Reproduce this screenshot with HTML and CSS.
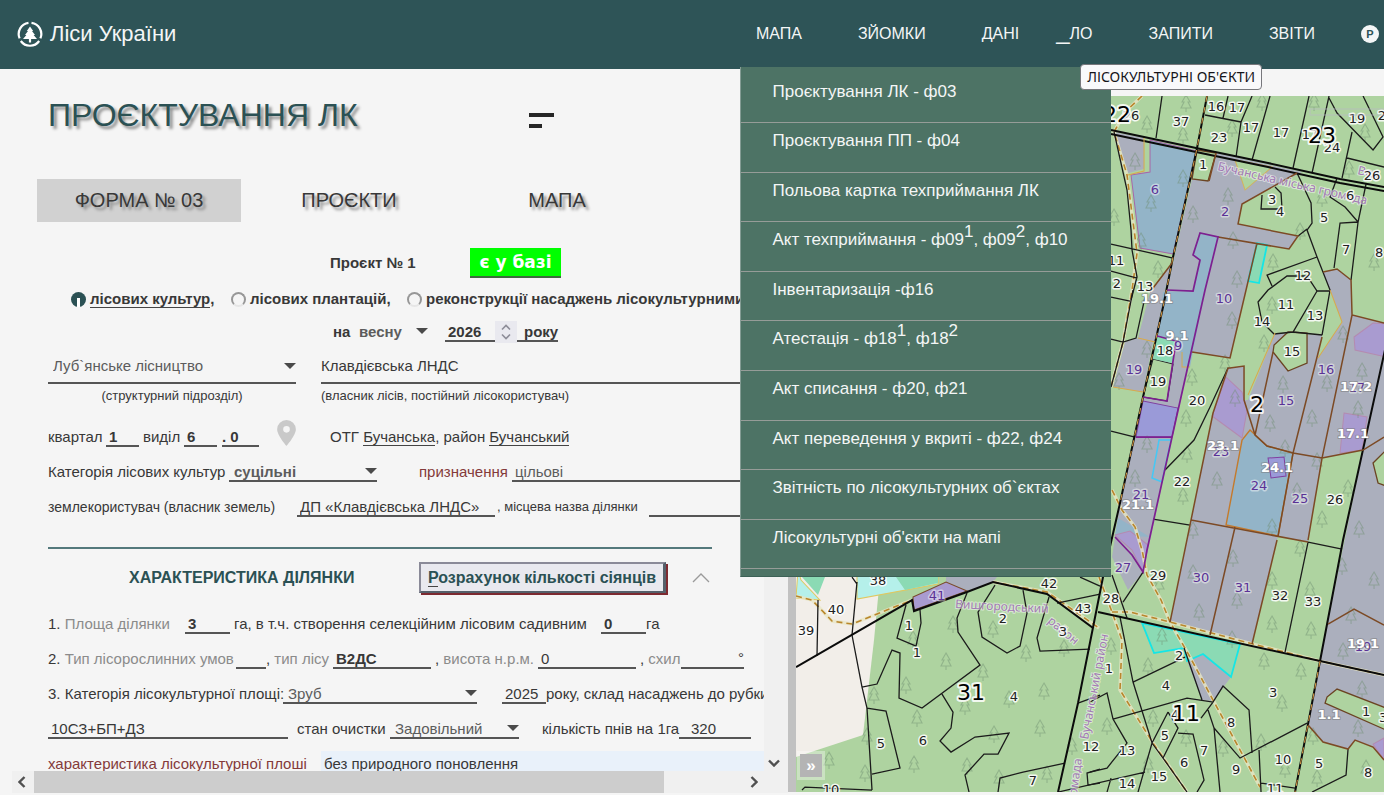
FILE: index.html
```html
<!DOCTYPE html>
<html lang="uk">
<head>
<meta charset="utf-8">
<title>Ліси України</title>
<link rel="stylesheet" href="styles.css">
</head>
<body>
<header class="top">
  <a class="brand" href="#">
    <svg class="brand-icon" viewBox="0 0 26 26" aria-hidden="true">
      <g fill="none" stroke="#fff" stroke-width="2.2">
        <path d="M11.5 1.8A11.3 11.3 0 0 0 2.6 17.4"/>
        <path d="M14.5 1.8A11.3 11.3 0 0 1 23.4 17.4"/>
        <path d="M3.8 20A11.3 11.3 0 0 0 22.2 20"/>
      </g>
      <path fill="#fff" d="M13 5.5L16.2 10H15L18 14H16.6L20 18H14.1V21.5H11.9V18H6L9.4 14H8L11 10H9.8Z"/>
    </svg>
    <span>Ліси України</span>
  </a>
  <nav>
    <ul class="nav">
      <li><a href="#">МАПА</a></li>
      <li><a href="#">ЗЙОМКИ</a></li>
      <li><a href="#">ДАНІ</a></li>
      <li class="open"><a href="#"><span class="mark">_</span>ЛО</a>
        <ul class="menu">
          <li><a href="#">Проєктування ЛК - ф03</a></li>
          <li><a href="#">Проєктування ПП - ф04</a></li>
          <li><a href="#">Польова картка техприймання ЛК</a></li>
          <li><a href="#">Акт техприймання - ф09<sup>1</sup>, ф09<sup>2</sup>, ф10</a></li>
          <li><a href="#">Інвентаризація -ф16</a></li>
          <li><a href="#">Атестація - ф18<sup>1</sup>, ф18<sup>2</sup></a></li>
          <li><a href="#">Акт списання - ф20, ф21</a></li>
          <li><a href="#">Акт переведення у вкриті - ф22, ф24</a></li>
          <li><a href="#">Звітність по лісокультурних об`єктах</a></li>
          <li><a href="#">Лісокультурні об'єкти на мапі</a></li>
        </ul>
        <span class="tip" role="tooltip">ЛІСОКУЛЬТУРНІ ОБ'ЄКТИ</span>
      </li>
      <li><a href="#">ЗАПИТИ</a></li>
      <li><a href="#">ЗВІТИ</a></li>
      <li class="user"><a class="avatar" href="#">P</a></li>
    </ul>
  </nav>
</header>
<main class="split">
  <section class="panel">
    <div class="panel-head">
      <h1>ПРОЄКТУВАННЯ ЛК</h1>
      <button class="burger" type="button" aria-label="Меню"><span></span><span></span></button>
    </div>
    <div class="tabs">
      <button class="tab on" type="button">ФОРМА № 03</button>
      <button class="tab" type="button">ПРОЄКТИ</button>
      <button class="tab" type="button">МАПА</button>
    </div>
    <div class="frame">
      <form class="form">
        <div class="row r-project"><b>Проєкт № 1</b><output class="badge">є у базі</output></div>
        <div class="row r-kind">
          <label class="kind"><input type="radio" name="kind" checked><span><u>лісових культур</u>,</span></label>
          <label class="kind"><input type="radio" name="kind"><span>лісових плантацій,</span></label>
          <label class="kind"><input type="radio" name="kind"><span>реконструкції насаджень лісокультурними</span></label>
        </div>
        <div class="row r-year">
          <label for="season">на</label>
          <span class="sel plain"><select id="season"><option>весну</option></select></span>
          <input id="year" class="field strong" type="text" value="2026">
          <button class="spin" type="button" aria-label="Змінити рік"><svg viewBox="0 0 22 22"><path d="M7 8.5L11 4.5L15 8.5M7 13.5L11 17.5L15 13.5" fill="none" stroke="#8d8d98" stroke-width="1.6"/></svg></button>
          <label class="under" for="year">року</label>
        </div>
        <div class="row r-org">
          <span class="sel tall"><select id="unit"><option>Луб`янське лісництво</option></select></span>
          <input id="owner" class="field tall" type="text" value="Клавдієвська ЛНДС">
        </div>
        <div class="captions">
          <label for="unit">(структурний підрозділ)</label>
          <label for="owner">(власник лісів, постійний лісокористувач)</label>
        </div>
        <div class="row r-plot">
          <label for="kv">квартал</label><input id="kv" class="field strong" value="1">
          <label for="vd">виділ</label><input id="vd" class="field strong" value="6"><input class="field strong" aria-label="підвиділ" value=". 0">
          <svg class="pin" viewBox="0 0 18 25" aria-hidden="true"><path fill="#c9c9c9" fill-rule="evenodd" d="M9 0A9 9 0 0 0 0 9C0 15 9 25 9 25S18 15 18 9A9 9 0 0 0 9 0ZM9 5.8A3.2 3.2 0 1 1 9 12.2A3.2 3.2 0 1 1 9 5.8Z"/></svg>
          <span>ОТГ <u>Бучанська</u>, район <u>Бучанський</u></span>
        </div>
        <div class="row r-cat">
          <label for="cat">Категорія лісових культур</label>
          <span class="sel strong"><select id="cat"><option>суцільні</option></select></span>
          <label class="red" for="purpose">призначення</label><input id="purpose" class="field dim" value="цільові">
        </div>
        <div class="row r-land">
          <label class="owner-label" for="land">землекористувач (власник земель)</label><input id="land" class="field" value="ДП «Клавдієвська ЛНДС»">
          <label class="small" for="place">, місцева назва ділянки</label><input id="place" class="field">
        </div>
        <hr>
        <div class="row r-head">
          <h2>ХАРАКТЕРИСТИКА ДІЛЯНКИ</h2>
          <button class="calc" type="button"><u>Р</u>озрахунок кількості сіянців</button>
          <button class="fold" type="button" aria-label="Згорнути"><svg viewBox="0 0 18 10"><path d="M1 9L9 1L17 9" fill="none" stroke="#9a9a9a" stroke-width="1.3"/></svg></button>
        </div>
        <div class="row r-area">
          <label for="area">1. <span class="soft">Площа ділянки</span></label><input id="area" class="field strong" value="3">
          <label for="area2">га, в т.ч. створення селекційним лісовим садивним</label><input id="area2" class="field strong" value="0"><span>га</span>
        </div>
        <div class="row r-type">
          <label for="tlu">2. <span class="soft">Тип лісорослинних умов</span></label><input id="tlu" class="field">
          <label for="tl">, <span class="soft">тип лісу</span></label><input id="tl" class="field strong" value="В2ДС">
          <label for="alt">, <span class="soft">висота н.р.м.</span></label><input id="alt" class="field" value="0">
          <label for="slope">, <span class="soft">схил</span></label><input id="slope" class="field right" value="°">
        </div>
        <div class="row r-lot">
          <label for="lot">3. Категорія лісокультурної площі:</label>
          <span class="sel"><select id="lot"><option>Зруб</option></select></span>
          <input id="cut" class="field" value="2025"><label for="cut">року, склад насаджень до рубки</label>
        </div>
        <div class="row r-clean">
          <input class="field" aria-label="склад насаджень" value="10СЗ+БП+ДЗ"><label for="clean">стан очистки</label>
          <span class="sel"><select id="clean"><option>Задовільний</option></select></span>
          <label for="stumps">кількість пнів на 1га</label><input id="stumps" class="field inset" value="320">
        </div>
        <div class="row r-note">
          <label class="red" for="note">характеристика лісокультурної плоші</label><input id="note" class="note" value="без природного поновлення">
        </div>
      </form>
      <div class="vbar"><svg viewBox="0 0 12 8"><path d="M1 1.5L6 6.5L11 1.5" fill="none" stroke="#505050" stroke-width="2.4"/></svg></div>
      <div class="hbar">
        <svg viewBox="0 0 8 12"><path d="M6.5 1L1.5 6L6.5 11" fill="none" stroke="#505050" stroke-width="2.4"/></svg>
        <div class="track"><div class="thumb"></div></div>
        <svg viewBox="0 0 8 12"><path d="M1.5 1L6.5 6L1.5 11" fill="none" stroke="#505050" stroke-width="2.4"/></svg>
      </div>
    </div>
  </section>
  <div class="divider"></div>
  <section class="map">
    <svg class="canvas" viewBox="796 96 588 696" preserveAspectRatio="xMinYMin slice" role="img" aria-label="Мапа кварталів">
      <defs>
        <g id="t"><path d="M0 -7L4 0H2L5 6H-5L-2 0H-4ZM0 6V10" fill="none" stroke="#6f8f72" stroke-opacity=".45" stroke-width="1.1"/></g>
      </defs>
      <rect x="796" y="96" width="588" height="696" fill="#aed3a0"/>
      <path fill="#f2eee9" d="M796 577H880L874 640L863 735L796 757Z"/>
      <path fill="#b5f0ea" stroke="#dfc860" d="M857 576H938V584L857 599ZM798 570L801 580L820 600L796 598Z"/>
      <path fill="#8bdab4" d="M896 577H938V583L905 590ZM802 577H825L818 595Z"/>
      <path fill="#abafbd" d="M1216 153L1302 172L1242 204L1238 224L1298 236L1289 249L1257 243L1230 358L1192 352L1172 438L1148 550L1143 572L1128 590L1112 557L1120 503L1143 397L1163 307L1192 179L1208 181Z"/>
      <path fill="#abafbd" d="M1114 132L1144 138V169L1128 173ZM1172 263L1150 292L1138 338L1155 342L1165 290ZM1125 342L1138 338L1153 342L1143 392L1113 387Z"/>
      <path fill="#abafbd" d="M1330 290L1323 272L1337 269L1351 280L1352 315L1384 323V675L1320 661L1363 450L1322 458L1308 542L1278 536L1252 644L1170 622L1191 520L1213 413L1228 368L1244 366V400L1248 400L1275 333L1322 335L1318 358L1342 322Z"/>
      <path fill="#abafbd" d="M1203 654L1231 677L1213 701L1202 700L1187 661ZM1320 661L1384 675V760L1373 747L1355 740L1348 749L1323 742L1308 725ZM946 577H997L993 582L967 591L946 582Z"/>
      <g fill="#93b4c8">
        <path stroke="#a866a8" d="M1150 140L1197 151L1173 254L1140 248L1131 175L1150 172Z"/>
        <path d="M1200 233L1218 237L1205 290L1190 367H1182L1180 350L1158 336L1163 292L1193 291L1200 260L1193 255Z"/>
        <path stroke="#c47a2c" stroke-width="1.4" d="M1250 430L1267 446L1293 453L1278 536L1226 525L1242 440Z"/>
        <path d="M1118 518L1150 537L1115 535Z"/>
      </g>
      <g fill="#aed3a0" stroke="#6b4423" stroke-width="1.3">
        <path d="M1197 150L1216 153L1208 181L1192 179Z"/>
        <path d="M1288 332L1307 333V363L1288 371L1273 352L1274 345Z"/>
        <path d="M1327 697L1337 689L1386 708V730L1325 703Z"/>
        <path d="M1386 450L1373 463L1378 483L1386 486Z"/>
      </g>
      <path fill="#aed3a0" stroke="#d4b25a" d="M1235 160L1245 190L1272 167Z"/>
      <path fill="#aed3a0" stroke="#222" d="M1153 359L1173 364L1167 401L1143 397Z"/>
      <g fill="#a99bd0" stroke="#b48bb0">
        <path d="M1226 377L1242 392L1247 410L1242 438L1212 416ZM1344 413L1367 417L1362 450L1340 453ZM1354 337L1373 323L1386 324V357L1355 350ZM1115 535L1130 531L1148 545L1143 572L1132 550ZM1384 738L1373 744L1384 760Z"/>
        <path stroke="#7a4a2a" d="M913 597L946 582L967 591L914 610Z"/>
        <path fill="#9a9ad8" stroke="#8040a0" d="M1143 401L1178 408L1172 437H1136ZM1268 458L1284 457L1286 476L1271 478Z"/>
      </g>
      <g fill="#8bdab4" stroke="#14e6e6" stroke-width="1.8">
        <path d="M1257 243L1267 245L1259 283L1248 281Z"/>
        <path d="M1142 623L1240 644L1231 677L1203 654L1187 661L1184 648L1154 653Z"/>
        <path stroke="none" d="M1157 336L1176 340L1172 363L1153 359Z"/>
        <path fill="none" stroke="#45c8f5" stroke-width="1.5" d="M1159 440H1171L1162 482L1152 478Z"/>
      </g>
      <g>
        <use href="#t" x="1186" y="102"/><use href="#t" x="1262" y="101"/><use href="#t" x="1147" y="123"/><use href="#t" x="1183" y="134"/><use href="#t" x="1232" y="127"/><use href="#t" x="1365" y="131"/><use href="#t" x="1135" y="160"/><use href="#t" x="1183" y="177"/><use href="#t" x="1151" y="202"/><use href="#t" x="1114" y="216"/><use href="#t" x="1228" y="195"/><use href="#t" x="1193" y="213"/><use href="#t" x="1233" y="239"/><use href="#t" x="1322" y="197"/><use href="#t" x="1349" y="168"/><use href="#t" x="1300" y="230"/><use href="#t" x="1273" y="261"/><use href="#t" x="1158" y="268"/><use href="#t" x="1237" y="278"/><use href="#t" x="1374" y="261"/><use href="#t" x="1141" y="240"/><use href="#t" x="1314" y="101"/>
        <use href="#t" x="1232" y="319"/><use href="#t" x="1272" y="304"/><use href="#t" x="1264" y="342"/><use href="#t" x="1192" y="376"/><use href="#t" x="1186" y="417"/><use href="#t" x="1147" y="348"/><use href="#t" x="1225" y="362"/><use href="#t" x="1235" y="397"/><use href="#t" x="1283" y="383"/><use href="#t" x="1327" y="382"/><use href="#t" x="1312" y="417"/><use href="#t" x="1362" y="370"/><use href="#t" x="1358" y="408"/><use href="#t" x="1343" y="333"/><use href="#t" x="1270" y="422"/><use href="#t" x="1147" y="443"/><use href="#t" x="1135" y="477"/><use href="#t" x="1183" y="495"/><use href="#t" x="1217" y="479"/><use href="#t" x="1187" y="453"/><use href="#t" x="1285" y="447"/><use href="#t" x="1317" y="460"/><use href="#t" x="1297" y="490"/><use href="#t" x="1348" y="487"/><use href="#t" x="1322" y="518"/><use href="#t" x="1359" y="528"/><use href="#t" x="1272" y="526"/><use href="#t" x="1193" y="529"/><use href="#t" x="1119" y="380"/>
        <use href="#t" x="1233" y="557"/><use href="#t" x="1272" y="579"/><use href="#t" x="1193" y="572"/><use href="#t" x="1310" y="589"/><use href="#t" x="1300" y="547"/><use href="#t" x="1342" y="565"/><use href="#t" x="1374" y="579"/><use href="#t" x="1159" y="583"/><use href="#t" x="1199" y="611"/><use href="#t" x="1237" y="599"/><use href="#t" x="1351" y="614"/><use href="#t" x="1272" y="623"/><use href="#t" x="1311" y="629"/><use href="#t" x="1162" y="635"/><use href="#t" x="1232" y="638"/><use href="#t" x="1148" y="665"/><use href="#t" x="1264" y="660"/><use href="#t" x="1301" y="670"/><use href="#t" x="1343" y="650"/><use href="#t" x="1282" y="702"/><use href="#t" x="1362" y="688"/><use href="#t" x="1153" y="717"/><use href="#t" x="1261" y="741"/><use href="#t" x="1313" y="735"/><use href="#t" x="1358" y="727"/><use href="#t" x="1317" y="777"/><use href="#t" x="1186" y="737"/><use href="#t" x="1107" y="725"/><use href="#t" x="1148" y="763"/><use href="#t" x="1223" y="747"/><use href="#t" x="1285" y="768"/><use href="#t" x="1366" y="767"/><use href="#t" x="1111" y="645"/>
        <use href="#t" x="953" y="623"/><use href="#t" x="946" y="660"/><use href="#t" x="906" y="684"/><use href="#t" x="874" y="694"/><use href="#t" x="983" y="671"/><use href="#t" x="993" y="628"/><use href="#t" x="1026" y="652"/><use href="#t" x="1064" y="647"/><use href="#t" x="1044" y="690"/><use href="#t" x="917" y="717"/><use href="#t" x="1040" y="727"/><use href="#t" x="994" y="733"/><use href="#t" x="867" y="735"/><use href="#t" x="914" y="763"/><use href="#t" x="829" y="759"/><use href="#t" x="865" y="772"/><use href="#t" x="967" y="765"/><use href="#t" x="1047" y="773"/><use href="#t" x="999" y="777"/><use href="#t" x="1009" y="698"/><use href="#t" x="913" y="638"/><use href="#t" x="965" y="705"/><use href="#t" x="1072" y="745"/>
      </g>
      <path fill="none" stroke="#e9e6c4" stroke-width="3.4" stroke-opacity=".8" d="M1142 96L1125 112L1114 132L1127 175L1137 253L1132 290L1123 342L1111 387M1112 490L1122 510L1135 527L1142 550L1147 575L1161 600L1170 622L1190 657L1213 700L1260 787M1099 577L1112 612L1122 640L1120 690L1153 743L1187 792M1112 612H1130L1170 622L1253 644L1320 661L1384 675M796 596L812 600L832 621L852 624L912 600M993 582L1047 592L1099 628"/>
      <path fill="none" stroke="#b9862c" stroke-width="1.6" stroke-dasharray="6 4" d="M1142 96L1125 112L1114 132L1127 175L1137 253L1132 290L1123 342L1111 387M1112 490L1122 510L1135 527L1142 550L1147 575L1161 600L1170 622L1190 657L1213 700L1260 787M1099 577L1112 612L1122 640L1120 690L1153 743L1187 792M1112 612H1130L1170 622L1253 644L1320 661L1384 675M796 596L812 600L832 621L852 624L912 600M993 582L1047 592L1099 628"/>
      <g fill="none" stroke="#1b1b1b" stroke-width="1.3">
        <path d="M1114 132L1127 190L1131 230L1132 250L1137 277L1131 300M1111 244L1173 258M1111 271L1137 278M1162 96L1156 138M1205 115L1241 122M1228 96L1223 118M1252 96L1241 122L1236 157M1270 96L1252 160M1309 96L1293 168M1329 96L1312 173M1329 98L1337 113L1373 150L1383 137L1363 96M1352 132L1342 178M1347 158L1384 167"/>
        <path d="M1262 195L1261 209H1282L1281 193L1275 187M1297 173L1311 203L1312 223L1307 230L1317 257L1330 290L1322 335M1298 236L1307 229M1337 178L1330 197L1345 207L1358 222M1366 184L1358 222L1351 280M1358 222L1340 223L1334 268M1317 257L1267 275L1272 286M1330 291H1317L1307 276H1287L1268 290L1258 302L1262 322L1274 334L1293 332L1317 291M1293 332L1322 335"/>
        <path d="M1111 297L1130 301M1133 290L1123 342L1111 387M1145 297L1136 338L1123 342L1111 339M1111 431L1135 437M1228 368L1210 407L1194 440L1165 470M1153 519L1190 525M1308 542L1342 549M1308 542L1285 652M1143 572L1123 602"/>
        <path d="M1120 617L1133 682L1152 743L1163 758L1187 792M1112 575L1127 618M1133 682L1185 657M1184 648L1202 700M1113 719L1187 698L1213 702L1223 686L1249 710L1252 753M1213 702L1201 718M1208 710L1214 728L1220 792M1214 728L1240 758L1307 723M1259 750L1261 792M1261 783L1295 788M1168 712L1152 743L1138 792M1168 712L1178 728L1163 758M1178 733L1193 734L1204 780L1197 792M1090 702L1107 693L1113 719L1127 743L1107 768L1090 772M1058 792L1145 772M1111 778L1107 792M1348 749L1346 775L1312 792"/>
        <path d="M857 582L852 635L862 687L867 708L872 790M818 600L817 656M852 577L857 584M906 605L897 638L916 646L921 623L920 610M862 687L877 684L892 650L900 653L899 698L922 708L980 665L958 632L957 618L967 593M942 694L953 712L951 728L940 741L951 752L975 737L1009 733L998 754H984L965 775L969 792M995 585L978 612L982 637L1007 653L1020 646L1027 613L1023 590M1049 597L1037 638L1040 651L1090 649M1057 603L1100 594M1080 577L1100 586M867 708L886 711L900 768L872 774M1078 703L1100 695M998 792L1000 778L1023 772L1065 763M802 790L805 787L872 790M1100 769L1087 773L1088 785L1100 783"/>
      </g>
      <g fill="none" stroke="#0b0b0b" stroke-width="2">
        <path d="M796 667L912 600L914 611L967 592L993 582L1047 594L1093 628M1098 612L1320 661L1384 675M1111 130L1196 148L1268 163L1340 179L1384 187M1111 134L1196 152L1268 167L1340 183L1384 191"/>
        <path d="M1207 96L1197 148L1173 257L1163 307L1143 397L1120 503L1103 577L1078 703L1058 792M1386 345L1343 540L1320 661L1295 792"/>
      </g>
      <path fill="none" stroke="#d99a45" stroke-dasharray="6 5" d="M1207 96L1197 148L1173 257L1163 307L1143 397L1120 503M1320 661L1295 792"/>
      <g fill="none" stroke="#7c4a25" stroke-width="1.5">
        <path d="M1216 153L1209 181M1297 173L1242 204L1238 224L1298 236L1289 249L1218 237M1257 243L1246 290L1230 358L1192 352M1323 272L1337 269L1351 280L1352 315L1384 323M1352 315L1322 458L1308 540M1322 337L1293 453M1273 352L1255 435M1213 413L1228 368L1230 368L1244 366V400L1255 435L1267 446L1293 453L1322 458L1363 450L1384 437M1213 413L1170 622M1191 520L1308 542M1277 540L1252 644M1235 527L1210 635M1293 453L1278 536M1328 624L1354 609L1384 625M1308 725L1323 742L1348 749L1355 740L1373 747L1384 760M1150 292L1172 263"/>
      </g>
      <path fill="none" stroke="#d9a94c" d="M1275 333L1248 395M1330 290L1342 322L1318 358M1113 387L1143 392M1138 338L1155 342M1144 138V171L1128 175M1190 367H1182V352"/>
      <path fill="none" stroke="#7d2090" stroke-width="1.7" d="M1167 290L1193 291L1200 260L1193 255L1200 233L1218 237L1205 290L1172 437L1147 550L1143 572L1132 555L1115 537M1172 437H1136M1157 336L1176 341L1167 401L1143 397"/>
      <g class="place">
        <text transform="translate(1217 170) rotate(13)">Бучанська міська громада</text>
        <text transform="translate(1357 174) rotate(13)">Вел</text>
        <text transform="translate(955 608) rotate(3)">Вишгородський</text>
        <text transform="translate(1047 622) rotate(40)">район</text>
        <text transform="translate(1088 740) rotate(-79)">Бучанський район</text>
        <text transform="translate(1075 808) rotate(-82)">громада</text>
      </g>
      <g class="no">
        <text x="1131" y="120">26</text><text x="1181" y="126">37</text><text x="1216" y="111">16</text><text x="1237" y="112">17</text><text x="1219" y="142">23</text><text x="1251" y="132">17</text><text x="1281" y="137">17</text><text x="1310" y="139">17</text><text x="1332" y="152">24</text><text x="1357" y="123">19</text><text x="1386" y="120">20</text><text x="1372" y="180">26</text><text x="1203" y="169">1</text><text x="1350" y="200">6</text><text x="1272" y="204">3</text><text x="1280" y="216">4</text><text x="1324" y="222">5</text><text x="1346" y="254">7</text><text x="1379" y="257">8</text><text x="1303" y="280">12</text><text x="1116" y="265">11</text><text x="1117" y="288">2</text><text x="1145" y="291">13</text>
        <text x="1286" y="309">11</text><text x="1315" y="320">13</text><text x="1262" y="326">14</text><text x="1292" y="356">15</text><text x="1165" y="355">18</text><text x="1158" y="386">19</text><text x="1197" y="405">20</text><text x="1182" y="486">22</text><text x="1335" y="504">26</text><text x="1158" y="580">29</text><text x="1111" y="603">28</text><text x="1280" y="600">32</text><text x="1313" y="606">33</text>
        <text x="1179" y="660">2</text><text x="1166" y="690">4</text><text x="1273" y="697">3</text><text x="1109" y="673">1</text><text x="1231" y="727">8</text><text x="1165" y="740">5</text><text x="1204" y="755">7</text><text x="1184" y="767">6</text><text x="1127" y="755">13</text><text x="1159" y="781">15</text><text x="1127" y="788">14</text><text x="1236" y="774">9</text><text x="1283" y="764">10</text><text x="1275" y="793">11</text><text x="1319" y="768">5</text><text x="1368" y="777">8</text><text x="1366" y="716">1</text><text x="1383" y="722">3</text><text x="1175" y="719">4</text>
        <text x="836" y="614">40</text><text x="806" y="635">39</text><text x="878" y="585">38</text><text x="909" y="630">1</text><text x="917" y="657">1</text><text x="1003" y="623">2</text><text x="1063" y="636">3</text><text x="1049" y="588">42</text><text x="1083" y="613">43</text><text x="1014" y="701">4</text><text x="881" y="748">5</text><text x="923" y="745">6</text><text x="1033" y="785">7</text><text x="1091" y="751">12</text><text x="831" y="794">10</text>
        <g class="violet"><text x="1155" y="194">6</text><text x="1225" y="216">2</text><text x="1224" y="303">10</text><text x="1134" y="374">19</text><text x="1178" y="350">9</text><text x="1286" y="405">15</text><text x="1326" y="374">16</text><text x="1357" y="392">17</text><text x="1141" y="499">21</text><text x="1221" y="456">23</text><text x="1259" y="490">24</text><text x="1300" y="503">25</text><text x="1123" y="572">27</text><text x="1201" y="582">30</text><text x="1243" y="592">31</text><text x="1363" y="651">19</text><text x="937" y="600">41</text></g>
        <g class="pale"><text x="1157" y="303">19.1</text><text x="1177" y="340">9.1</text><text x="1356" y="391">17.2</text><text x="1353" y="438">17.1</text><text x="1223" y="450">23.1</text><text x="1277" y="472">24.1</text><text x="1138" y="509">21.1</text><text x="1363" y="648">19.1</text><text x="1329" y="719">1.1</text></g>
        <g class="big"><text x="1117" y="122">22</text><text x="1322" y="143">23</text><text x="1257" y="412">2</text><text x="971" y="700">31</text><text x="1186" y="721">11</text></g>
      </g>
      <rect x="1310" y="109" width="90" height="6" fill="none" stroke="#b9b9c4" stroke-opacity=".7"/>
    </svg>
    <button class="expand" type="button">»</button>
  </section>
</main>
</body>
</html>
```
FILE: styles.css
```css
* { box-sizing: border-box; }
body {
  margin: 0;
  height: 100vh;
  display: flex;
  flex-direction: column;
  overflow: hidden;
  background: #f5f5f5;
  color: #383838;
  font: 15px/20px "Liberation Sans", Arial, sans-serif;
}
a { color: inherit; text-decoration: none; }
ul { list-style: none; margin: 0; padding: 0; }
button { font: inherit; color: inherit; border: 0; padding: 0; background: none; }

.top {
  flex: none;
  height: 69px;
  display: flex;
  align-items: center;
  justify-content: space-between;
  padding: 0 5px 2px 17px;
  background: #2e5457;
  color: #f4f6f6;
}
.brand { display: flex; align-items: center; gap: 7px; font-size: 22px; }
.brand-icon { width: 26px; height: 26px; }
.nav { display: flex; align-items: center; gap: 56px; font-size: 16px; }
.open { position: relative; z-index: 5; margin-left: -19px; }
.mark { font-size: 24px; line-height: 0; }
.user { margin-left: -10px; }
.avatar {
  display: block;
  width: 18px;
  height: 18px;
  border-radius: 50%;
  background: #f4f6f6;
  color: #2e5457;
  font: bold 11px/18px "Liberation Sans", Arial, sans-serif;
  text-align: center;
}
.menu {
  position: absolute;
  top: 43px;
  right: -18px;
  width: 371px;
  height: 510px;
  display: flex;
  flex-direction: column;
  padding: 7px 0 6px;
  background: #4d7365;
  border-left: 1px solid #849c94;
  border-bottom: 1px solid #3c6156;
  font-size: 17px;
}
.menu li {
  flex: 1;
  padding: 8px 0 0 32px;
  border-bottom: 1px solid #969c98;
  white-space: nowrap;
}
.menu sup { font-size: 17px; line-height: 0; vertical-align: 8px; }
.tip {
  position: absolute;
  top: 40px;
  left: 24px;
  padding: 2px 6px;
  border: 1px solid #77777c;
  border-radius: 4px;
  background: #f9f9fb;
  color: #15141a;
  font: 14px/20px "Noto Sans", sans-serif;
  white-space: nowrap;
}

.split { flex: 1; min-height: 0; display: grid; grid-template-columns: 67fr 8px 50fr; }
.panel { min-width: 0; min-height: 0; display: flex; flex-direction: column; }
.panel-head { display: flex; align-items: center; padding: 26px 0 0 48px; }
h1 {
  margin: 0;
  width: 481px;
  font-size: 32px;
  line-height: 40px;
  font-weight: normal;
  color: #2b5154;
  text-shadow: 3px 3px 3px #8a8a8a;
}
.burger { display: grid; gap: 7px; padding-top: 10px; }
.burger span { width: 25px; height: 4px; background: #262626; }
.burger span + span { width: 13px; }
.tabs { display: grid; grid-template-columns: 204px 216px 200px; padding: 44px 0 0 37px; }
.tab { height: 43px; font-size: 20px; line-height: 43px; text-shadow: 3px 3px 3px #8a8a8a; }
.tab.on { background: #d1d1d1; }

.frame {
  flex: 1;
  min-height: 0;
  display: grid;
  grid-template: minmax(0, 1fr) 22px / minmax(0, 1fr) 24px;
  margin: 23px 0 2px 12px;
}
.form { overflow: hidden; padding-left: 36px; white-space: nowrap; color: #383838; }
.row { display: grid; align-items: center; justify-content: start; height: 35px; }
.field, .note, select {
  width: 100%;
  height: 20px;
  padding: 2px 3px 0;
  border: 0;
  border-radius: 0;
  border-bottom: 2px solid #555;
  background: none;
  color: #383838;
  font: inherit;
}
.strong, .strong select { font-weight: bold; }
.dim, select { color: #5c5c5c; }
.sel { position: relative; display: block; }
.sel::after {
  content: "";
  position: absolute;
  right: 0;
  top: 6px;
  border: 6px solid transparent;
  border-top-color: #4a4a4a;
  border-bottom-width: 0;
}
.sel select { appearance: none; display: block; padding: 0 5px; }
.sel.plain select { border-bottom: 0; padding: 0; }
.tall, .tall select { height: 35px; }
.sel.tall::after { top: 14px; }
.field.tall { padding: 0; }
.right { text-align: right; padding: 0; }
.inset { padding-left: 12px; }
.soft { color: #8b8b8b; }
.red { color: #843a3a; }
.small { font-size: 13px; }
.owner-label { font-size: 14px; }
u { text-decoration: none; border-bottom: 1px solid #444; }

.r-project { grid-template-columns: 140px 91px; padding-left: 282px; }
.badge {
  height: 30px;
  border-bottom: 2px solid #3d6b3d;
  background: #0f0;
  color: #fff;
  font: bold 17px/28px "DejaVu Sans", sans-serif;
  text-align: center;
}
.r-kind { grid-template-columns: 160px 176px auto; padding-left: 23px; font-weight: bold; height: 38px; }
.kind { display: flex; align-items: center; gap: 4px; }
.kind input {
  appearance: none;
  margin: 0;
  width: 15px;
  height: 15px;
  border: 2px solid #979797;
  border-bottom-color: #e6e6e6;
  border-radius: 50%;
}
.kind input:checked { border: 0; background: linear-gradient(#fff, #fff) 50% 100% / 3px 9px no-repeat #2b5154; }
.r-year { grid-template-columns: 26px 69px 50px 22px auto; padding-left: 285px; height: 28px; font-weight: bold; }
.r-year .field { margin-left: 17px; width: 50px; }
.r-year .spin { margin-left: 17px; width: 22px; height: 22px; background: #e9e9ef; }
.spin svg { display: block; }
.r-year .under { margin-left: 17px; padding-left: 7px; height: 20px; border-bottom: 2px solid #555; }
.r-org { grid-template-columns: 248px 460px; gap: 25px; margin-top: 3px; }
.captions { display: grid; grid-template-columns: 248px 460px; gap: 25px; height: 35px; padding-top: 2px; font-size: 13px; }
.captions label:first-child { text-align: center; }
.r-plot, .r-cat { display: flex; }
.r-plot > *, .r-cat > * { flex: none; }
.r-plot label { width: 58px; }
.r-plot .field { width: 33px; }
.r-plot label + .field + label { width: 41px; margin-left: 4px; }
.r-plot .field + .field { width: 37px; margin-left: 5px; padding-left: 0; }
.pin { width: 19px; height: 26px; margin: 0 34px 8px 18px; }
.r-cat label { width: 181px; }
.r-cat .sel { width: 148px; }
.r-cat .red { width: 93px; margin-left: 42px; }
.r-cat .field { width: 290px; }
.r-land { grid-template-columns: 249px 198px 154px 290px; }
.r-land label + .field + label { padding-left: 2px; }
hr { margin: 23px 0 11px; width: 664px; border: 0; border-top: 2px solid #54797c; }
.r-head { grid-template-columns: 371px 249px auto; margin-bottom: 11px; }
h2 { margin: 0 0 0 81px; font-size: 16px; line-height: 20px; color: #2b5154; }
.calc {
  width: 247px;
  height: 31px;
  border: 2px solid #8a8a98;
  border-right-width: 3px;
  border-bottom-color: #55606a;
  border-right-color: #55606a;
  box-shadow: 2px 2px 0 #7d2a30;
  background: #e9e9ef;
  color: #2b5154;
  font-size: 16px;
  font-weight: bold;
}
.fold { width: 18px; margin-left: 24px; }
.fold svg { display: block; }
.r-area { grid-template-columns: 137px 49px 367px 45px auto; }
.r-area #area { width: 45px; }
.r-type { grid-template-columns: 188px 30px 67px 98px 107px 98px 45px 63px; }
.r-type label[for="alt"], .r-type label[for="slope"] { padding-left: 4px; }
.r-lot { grid-template-columns: 235px 219px 44px auto; }
.r-lot .sel { width: 194px; }
.r-clean { grid-template-columns: 249px 93px 152px 137px 72px; }
.r-clean .field:first-child { width: 240px; }
.r-clean .sel { width: 129px; }
.r-note { grid-template-columns: 273px 460px; }
.note { height: 26px; padding-top: 0; border: 0; background: #e9f1fa; }
.vbar { display: flex; align-items: flex-end; justify-content: center; padding: 0 4px 4px 0; background: #f0f0f0; }
.vbar svg { width: 12px; height: 8px; }
.hbar { grid-column: 1 / -1; display: flex; align-items: center; padding: 0 30px 0 6px; background: #f0f0f0; }
.hbar svg { width: 8px; height: 12px; flex: none; }
.track { flex: 1; align-self: stretch; margin: 0 0 0 8px; }
.thumb { width: 88%; height: 100%; background: #cdcdcd; }
.divider { background: #c1c1c1; margin-bottom: 3px; }
.map { position: relative; min-width: 0; min-height: 0; padding: 27px 0 3px; }
.canvas { display: block; width: 100%; height: 100%; }
.canvas text { font-family: "DejaVu Sans", sans-serif; paint-order: stroke; stroke: #fff; stroke-opacity: .85; stroke-width: 3px; stroke-linejoin: round; }
.no { font-size: 13px; text-anchor: middle; fill: #222; }
.violet { fill: #5b3296; }
.canvas .violet text { stroke-opacity: .45; }
.pale { fill: #fff; font-weight: bold; }
.canvas .pale text { stroke: #777; stroke-opacity: .5; stroke-width: 2px; }
.big { font-size: 22px; fill: #000; }
.canvas .big text { stroke-width: 4px; }
.place { font-size: 12px; fill: #a27ab4; }
.canvas .place text { stroke-opacity: .5; stroke-width: 2px; font-family: "Noto Sans", sans-serif; }
.expand {
  position: absolute;
  left: 4px;
  bottom: 18px;
  width: 22px;
  height: 23px;
  background: #b4b4b4;
  color: #fff;
  font: bold 17px/20px "Liberation Sans", Arial, sans-serif;
  outline: 3px solid rgba(255, 255, 255, .35);
}
```
